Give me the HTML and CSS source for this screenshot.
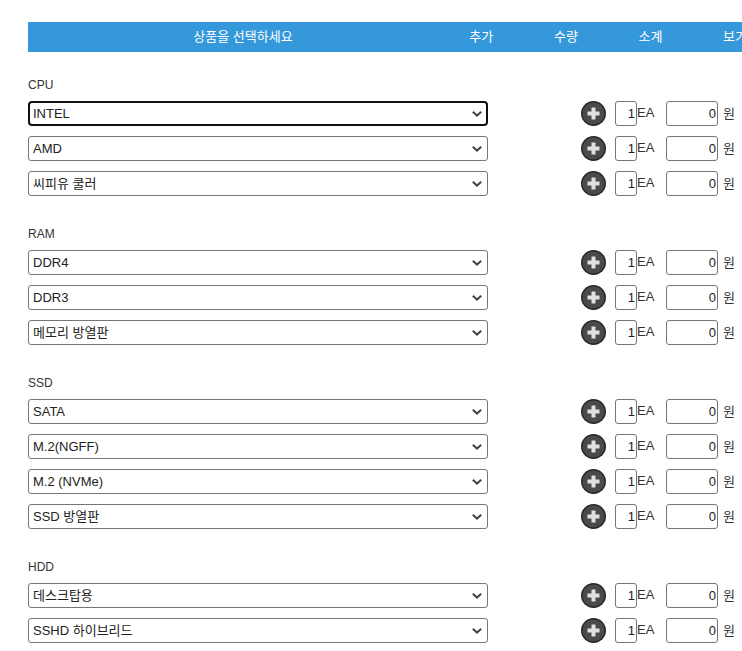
FILE: index.html
```html
<!DOCTYPE html>
<html lang="ko">
<head>
  <meta charset="UTF-8">
  <meta name="viewport" content="width=device-width, initial-scale=1.0">
  <title>상품 선택</title>
  <link rel="stylesheet" href="styles.css">
</head>
<body>
  <svg class="sprite" width="0" height="0">
    <defs>
      <symbol id="plus" viewBox="0 0 25 25">
        <circle cx="12.5" cy="12.5" r="12.5" fill="#262626"/>
        <circle cx="12.5" cy="12.5" r="11" fill="#4a4a4a"/>
        <path d="M10.5 6.5h4v4h4v4h-4v4h-4v-4h-4v-4h4z" fill="#e0e0e0"/>
      </symbol>
    </defs>
  </svg>

  <div class="order">
    <div class="head">
      <div class="head-title">상품을 선택하세요</div>
      <div class="head-col">추가</div>
      <div class="head-col">수량</div>
      <div class="head-col">소계</div>
      <div class="head-col">보기</div>
    </div>

    <section class="group">
      <div class="group-name">CPU</div>
      <div class="row">
        <select class="pick" autofocus><option>INTEL</option></select>
        <button class="add" type="button"><svg width="25" height="25"><use href="#plus"/></svg></button>
        <input class="qty" value="1"><span class="unit">EA</span>
        <input class="sum" value="0"><span class="won">원</span>
      </div>
      <div class="row">
        <select class="pick"><option>AMD</option></select>
        <button class="add" type="button"><svg width="25" height="25"><use href="#plus"/></svg></button>
        <input class="qty" value="1"><span class="unit">EA</span>
        <input class="sum" value="0"><span class="won">원</span>
      </div>
      <div class="row">
        <select class="pick"><option>씨피유 쿨러</option></select>
        <button class="add" type="button"><svg width="25" height="25"><use href="#plus"/></svg></button>
        <input class="qty" value="1"><span class="unit">EA</span>
        <input class="sum" value="0"><span class="won">원</span>
      </div>
    </section>

    <section class="group">
      <div class="group-name">RAM</div>
      <div class="row">
        <select class="pick"><option>DDR4</option></select>
        <button class="add" type="button"><svg width="25" height="25"><use href="#plus"/></svg></button>
        <input class="qty" value="1"><span class="unit">EA</span>
        <input class="sum" value="0"><span class="won">원</span>
      </div>
      <div class="row">
        <select class="pick"><option>DDR3</option></select>
        <button class="add" type="button"><svg width="25" height="25"><use href="#plus"/></svg></button>
        <input class="qty" value="1"><span class="unit">EA</span>
        <input class="sum" value="0"><span class="won">원</span>
      </div>
      <div class="row">
        <select class="pick"><option>메모리 방열판</option></select>
        <button class="add" type="button"><svg width="25" height="25"><use href="#plus"/></svg></button>
        <input class="qty" value="1"><span class="unit">EA</span>
        <input class="sum" value="0"><span class="won">원</span>
      </div>
    </section>

    <section class="group">
      <div class="group-name">SSD</div>
      <div class="row">
        <select class="pick"><option>SATA</option></select>
        <button class="add" type="button"><svg width="25" height="25"><use href="#plus"/></svg></button>
        <input class="qty" value="1"><span class="unit">EA</span>
        <input class="sum" value="0"><span class="won">원</span>
      </div>
      <div class="row">
        <select class="pick"><option>M.2(NGFF)</option></select>
        <button class="add" type="button"><svg width="25" height="25"><use href="#plus"/></svg></button>
        <input class="qty" value="1"><span class="unit">EA</span>
        <input class="sum" value="0"><span class="won">원</span>
      </div>
      <div class="row">
        <select class="pick"><option>M.2 (NVMe)</option></select>
        <button class="add" type="button"><svg width="25" height="25"><use href="#plus"/></svg></button>
        <input class="qty" value="1"><span class="unit">EA</span>
        <input class="sum" value="0"><span class="won">원</span>
      </div>
      <div class="row">
        <select class="pick"><option>SSD 방열판</option></select>
        <button class="add" type="button"><svg width="25" height="25"><use href="#plus"/></svg></button>
        <input class="qty" value="1"><span class="unit">EA</span>
        <input class="sum" value="0"><span class="won">원</span>
      </div>
    </section>

    <section class="group">
      <div class="group-name">HDD</div>
      <div class="row">
        <select class="pick"><option>데스크탑용</option></select>
        <button class="add" type="button"><svg width="25" height="25"><use href="#plus"/></svg></button>
        <input class="qty" value="1"><span class="unit">EA</span>
        <input class="sum" value="0"><span class="won">원</span>
      </div>
      <div class="row">
        <select class="pick"><option>SSHD 하이브리드</option></select>
        <button class="add" type="button"><svg width="25" height="25"><use href="#plus"/></svg></button>
        <input class="qty" value="1"><span class="unit">EA</span>
        <input class="sum" value="0"><span class="won">원</span>
      </div>
    </section>
  </div>
</body>
</html>
```

FILE: styles.css
```css
html, body {
  margin: 0;
  height: 100%;
  overflow: hidden;
  background: #fff;
}
body {
  font-family: "Liberation Sans", "Noto Sans CJK KR", sans-serif;
  font-size: 12px;
  color: #333;
}
.sprite {
  display: block;
  height: 0;
}
.order {
  width: 760px;
  padding: 22px 0 0 28px;
}
.head {
  display: flex;
  height: 30px;
  line-height: 30px;
  background: #3498db;
  color: #fff;
  font-size: 13px;
}
.head-title {
  width: 392px;
  padding-left: 19px;
  text-align: center;
}
.head-col {
  width: 84.6px;
  text-align: center;
}
.group {
  padding-bottom: 20px;
}
.head + .group {
  margin-top: 25px;
}
.group-name {
  height: 16px;
  line-height: 16px;
  margin-bottom: 8px;
}
.row {
  display: flex;
  align-items: center;
  height: 25px;
  margin-bottom: 10px;
}
.pick {
  appearance: none;
  box-sizing: border-box;
  width: 460px;
  height: 25px;
  padding: 0 0 0 4px;
  border: 1px solid #767676;
  border-radius: 3px;
  font-family: inherit;
  font-size: 13px;
  color: #222;
  background: #fff url("data:image/svg+xml,%3Csvg xmlns='http://www.w3.org/2000/svg' width='10' height='6'%3E%3Cpath d='M.8.8 5 4.6 9.2.8' fill='none' stroke='%23444' stroke-width='2'/%3E%3C/svg%3E") no-repeat right 5px center;
}
.add {
  display: block;
  width: 25px;
  height: 25px;
  margin-left: 93px;
  padding: 0;
  border: 0;
  background: none;
}
.add svg {
  display: block;
}
.qty, .sum {
  box-sizing: border-box;
  height: 25px;
  padding: 0 1px 0 0;
  border: 1px solid #767676;
  border-radius: 3px;
  font-family: inherit;
  font-size: 13px;
  color: #222;
  text-align: right;
}
.qty {
  width: 22px;
  margin-left: 9px;
}
.unit {
  width: 29px;
  padding-bottom: 2px;
  font-size: 13px;
}
.sum {
  width: 52px;
}
.won {
  margin-left: 5px;
  padding-bottom: 2px;
  font-size: 13px;
}
```
